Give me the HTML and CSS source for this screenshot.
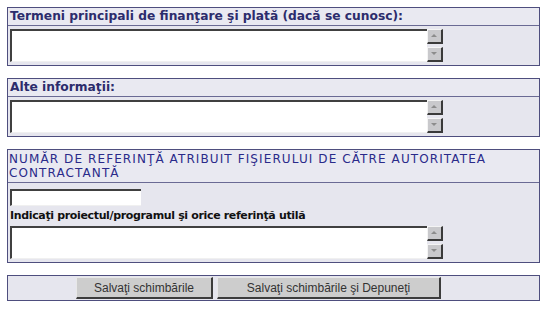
FILE: index.html
```html
<!DOCTYPE html>
<html lang="ro">
<head>
  <meta charset="UTF-8" />
  <title>Informații suplimentare</title>
  <link rel="stylesheet" href="styles.css">
</head>
<body>

  <div class="pagina">

    <div class="caseta">
      <div class="titlu">Termeni principali de finanţare şi plată (dacă se cunosc):</div>
      <div class="continut">
        <div class="zona-text">
          <div class="alb"></div>
          <div class="derulare">
            <span class="sageata sus"></span>
            <span class="sageata jos"></span>
          </div>
        </div>
      </div>
    </div>

    <div class="caseta">
      <div class="titlu">Alte informaţii:</div>
      <div class="continut">
        <div class="zona-text">
          <div class="alb"></div>
          <div class="derulare">
            <span class="sageata sus"></span>
            <span class="sageata jos"></span>
          </div>
        </div>
      </div>
    </div>

    <div class="caseta">
      <div class="titlu titlu-mare">NUMĂR DE REFERINŢĂ ATRIBUIT FIŞIERULUI DE CĂTRE AUTORITATEA CONTRACTANTĂ</div>
      <div class="continut">
        <div class="camp-scurt"></div>
        <div class="eticheta">Indicaţi proiectul/programul şi orice referinţă utilă</div>
        <div class="zona-text">
          <div class="alb"></div>
          <div class="derulare">
            <span class="sageata sus"></span>
            <span class="sageata jos"></span>
          </div>
        </div>
      </div>
    </div>

    <div class="caseta butoane">
      <button class="buton buton-mic">Salvaţi schimbările</button>
      <button class="buton buton-mare">Salvaţi schimbările şi Depuneţi</button>
    </div>

  </div>

</body>
</html>
```

FILE: styles.css
```css
body {
  margin: 0;
  background-color: #ffffff;
  font-family: "DejaVu Sans", Verdana, sans-serif;
}

.pagina {
  display: flex;
  flex-direction: column;
  gap: 12px;
  padding: 7px 0 0 7px;
  width: 533px;
}

.caseta {
  border: 1px solid #4e4e7e;
  background-color: #e6e6ee;
}

.titlu {
  background-color: #e9e9f1;
  border-bottom: 1px solid #6a6a94;
  color: #2c2c6c;
  font-weight: bold;
  font-size: 12.25px;
  line-height: 17px;
  padding-left: 2px;
}

.titlu-mare {
  font-weight: normal;
  font-size: 12px;
  letter-spacing: 1.1px;
  line-height: 14px;
  padding: 2px 0 2px 1px;
  color: #2a2a8a;
}

.continut {
  padding: 3px 2px 3px 2px;
}

.zona-text {
  display: flex;
  width: 433px;
  height: 33px;
}

.alb {
  flex-grow: 1;
  background-color: #ffffff;
  border-top: 2px solid #404040;
  border-left: 2px solid #404040;
  border-bottom: 1px solid #f0f0f0;
}

.derulare {
  width: 16px;
  display: flex;
  flex-direction: column;
  gap: 3px;
}

.sageata {
  position: relative;
  width: 13px;
  height: 12px;
  background-color: #c9c9cc;
  border-right: 2px solid #3a3a3a;
  border-bottom: 2px solid #3a3a3a;
  border-top: 1px solid #f4f4f4;
  border-left: 1px solid #f4f4f4;
}

.sageata::after {
  content: "";
  position: absolute;
  left: 3px;
  width: 0;
  height: 0;
  border-left: 3px solid transparent;
  border-right: 3px solid transparent;
}

.sus::after {
  top: 4px;
  border-bottom: 3px solid #8c8c8c;
}

.jos::after {
  top: 4px;
  border-top: 3px solid #8c8c8c;
}

.camp-scurt {
  width: 129px;
  height: 14px;
  margin-top: 3px;
  background-color: #ffffff;
  border-top: 2px solid #404040;
  border-left: 2px solid #404040;
  border-bottom: 1px solid #f0f0f0;
}

.eticheta {
  font-size: 11px;
  font-weight: bold;
  letter-spacing: -0.35px;
  color: #111111;
  line-height: 14px;
  margin: 3px 0 3px 0;
}

.butoane {
  display: flex;
  gap: 4px;
  padding: 1px 0 1px 68px;
  background-color: #e6e6ee;
}

.buton {
  height: 22px;
  font-family: "Liberation Sans", Arial, sans-serif;
  font-size: 12px;
  color: #333333;
  background-color: #cdcdcd;
  border-top: 1px solid #e8e8e8;
  border-left: 1px solid #e8e8e8;
  border-right: 2px solid #3c3c3c;
  border-bottom: 2px solid #3c3c3c;
  padding: 0;
}

.buton-mic {
  width: 137px;
}

.buton-mare {
  width: 224px;
}
```
